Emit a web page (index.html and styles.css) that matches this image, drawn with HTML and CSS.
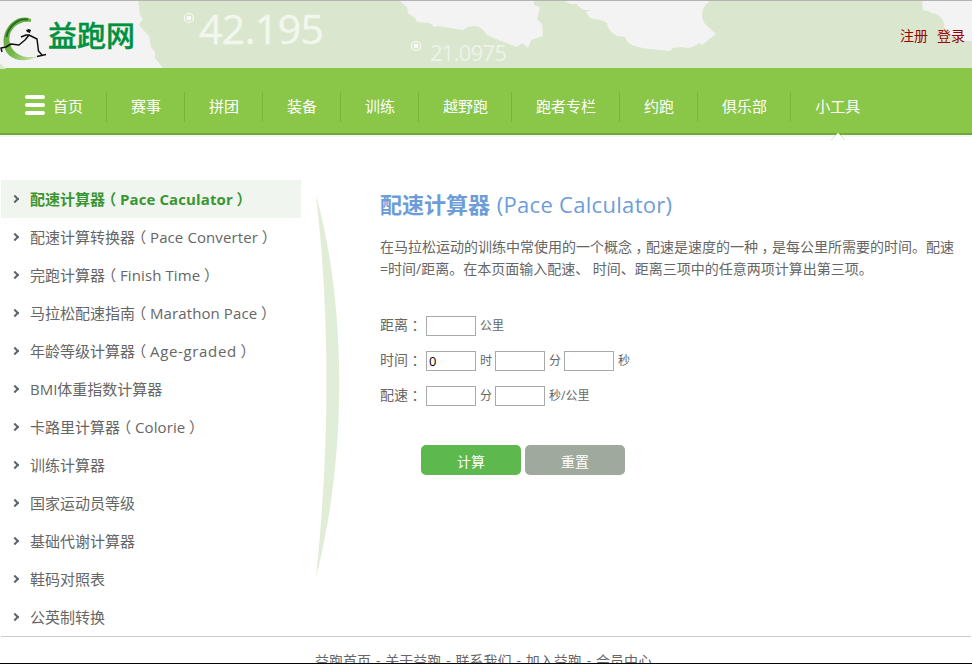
FILE: index.html
```html
<!DOCTYPE html>
<html lang="zh-CN">
<head>
<meta charset="utf-8">
<title>配速计算器 - 益跑网</title>
<link rel="stylesheet" href="styles.css">
</head>
<body>
<div class="page">
  <header class="header">
    <svg class="header-art" width="972" height="68" viewBox="0 0 972 68" aria-hidden="true">
      <path fill="#dbe6cf" d="M138 0L140 14 143 18 139 24 146 32 149 35 151 46 155 51 155 57 163 67 972 67 972 40 960 40 945 32 944 22Q941 13 932 12L928 10 923 9 922 0H710C700 7 701 18 705 23L716 33 702 44 699 42Q691 49 682 46L673 47 670 50 650 48Q631 46 627 40L625 36 617 35Q607 29 607 22 601 18 592 18 586 13 586 11L591 9 584 9 579 6 577 3 570 3 565 0H534L534 4 540 6 537 18 542 23 543 35 531 39 528 47 522 42 517 46Q500 40 487 34L484 30Q480 25 472 25 466 26 463 29L444 26 438 25 434 26 430 22 417 21 415 17 408 12 407 6 400 0Z"/>
      <path fill="#dbe6cf" d="M0 62L6 68H0Z"/>
      <g fill="none" stroke="#f8fbf4" stroke-width="1.200"><circle cx="189" cy="17" r="4.500"/><circle cx="416" cy="45" r="4.500"/></g>
      <g fill="#fafcf8"><circle cx="189" cy="17" r="2.300"/><circle cx="416" cy="45" r="2.300"/></g>
      <text class="art-big" x="199" y="42.500" textLength="125">42.195</text>
      <text class="art-small" x="430" y="60" textLength="77">21.0975</text>
    </svg>
    <a class="logo" href="#">
      <svg width="48" height="50" viewBox="0 0 48 50" aria-hidden="true">
        <defs><linearGradient id="ring" x1="0" y1="0" x2="1" y2="1"><stop offset="0" stop-color="#5aa43b"/><stop offset=".55" stop-color="#74b748"/><stop offset="1" stop-color="#d4eabc"/></linearGradient></defs>
        <path fill="url(#ring)" d="M31 6C18 0 4 13 3.500 28 3 44 20 53 38 43 25 47 11 41 9.500 28 8 17 18 7 31 9Z"/>
        <path fill="none" stroke="#286c27" stroke-width="2" d="M28 6.500C17 5 8 14 6.500 24"/>
        <path fill="none" stroke="#111" stroke-width="1.500" stroke-linejoin="round" d="M2 39L1 35 6 34 11 31 19 32 25 27 29 22 37 26 38.500 38 42 42M37 43.500L46 41.500M21 24L26 22 29 22"/>
        <path fill="#111" d="M26 17L29 16 31 17 30 20 27 19Z"/>
      </svg>
      <span class="logo-text">益跑网</span>
    </a>
    <div class="account"><a href="#">注册</a><a href="#">登录</a></div>
  </header>
  <nav class="nav">
    <a class="home" href="#"><span class="bars"><i></i><i></i><i></i></span>首页</a>
    <a href="#">赛事</a><a href="#">拼团</a><a href="#">装备</a><a href="#">训练</a><a href="#">越野跑</a><a href="#">跑者专栏</a><a href="#">约跑</a><a href="#">俱乐部</a>
    <a class="current" href="#">小工具<svg class="pointer" width="16" height="8" viewBox="0 0 16 8"><path fill="#fff" d="M1 8L8 0 15 8Z"/><path fill="none" stroke="#cfe7b0" d="M1 7L8 0 15 7"/></svg></a>
  </nav>
  <main class="main">
    <ul class="menu">
      <li class="active">配速计算器<b class="mid">（</b><span>Pace Caculator</span><b class="mid">）</b></li>
      <li>配速计算转换器<b class="mid">（</b><span>Pace Converter</span><b class="mid">）</b></li>
      <li>完跑计算器<b class="mid">（</b><span>Finish Time</span><b class="mid">）</b></li>
      <li>马拉松配速指南<b class="mid">（</b><span>Marathon Pace</span><b class="mid">）</b></li>
      <li>年龄等级计算器<b class="mid">（</b><span class="wide">Age-graded</span><b class="mid">）</b></li>
      <li>BMI体重指数计算器</li>
      <li>卡路里计算器<b class="mid">（</b><span>Colorie</span><b class="mid">）</b></li>
      <li>训练计算器</li>
      <li>国家运动员等级</li>
      <li>基础代谢计算器</li>
      <li>鞋码对照表</li>
      <li>公英制转换</li>
    </ul>
    <svg class="arc" width="30" height="386" viewBox="0 0 30 386" aria-hidden="true"><path fill="#e1edd6" d="M2 2C32 110 34 260 2 384C15 260 17 130 2 2Z"/></svg>
    <section class="content">
      <h1><strong>配速计算器</strong> <span>(Pace Calculator)</span></h1>
      <p class="intro">在马拉松运动的训练中常使用的一个概念<span class="mid">，</span>配速是速度的一种<span class="mid">，</span>是每公里所需要的时间。配速<br>=时间/距离。在本页面输入配速、 时间、距离三项中的任意两项计算出第三项。</p>
      <form>
        <div class="row"><label>距离<span class="mid">：</span></label><input type="text"><span>公里</span></div>
        <div class="row"><label>时间<span class="mid">：</span></label><input type="text" value="0"><span>时</span><input type="text"><span>分</span><input type="text"><span>秒</span></div>
        <div class="row"><label>配速<span class="mid">：</span></label><input type="text"><span>分</span><input type="text"><span>秒/公里</span></div>
        <div class="buttons"><button class="calc" type="button">计算</button><button class="reset" type="reset">重置</button></div>
      </form>
    </section>
  </main>
  <footer class="footer">益跑首页 - 关于益跑 - 联系我们 - 加入益跑 - 会员中心</footer>
</div>
</body>
</html>
```
FILE: styles.css
```css
* { box-sizing: border-box; }
body { margin: 0; background: #fff; color: #666; font: 14px/22px "Open Sans", "Noto Sans CJK SC", sans-serif; }
a { color: inherit; text-decoration: none; }
.page { height: 664px; overflow: hidden; display: flex; flex-direction: column; border-bottom: 1px solid #050505; }
.header { position: relative; height: 68px; flex: none; display: flex; justify-content: space-between; background: #f3f3f3; border-top: 1px solid #b5b2b5; }
.header-art { position: absolute; left: 0; top: 0; }
.header-art text { font-family: "Open Sans", sans-serif; fill: #f2f7ee; }
.header-art .art-big { font-size: 41px; stroke: #f2f7ee; stroke-width: .5px; }
.header-art .art-small { font-size: 22px; fill: #edf3e8; }
.logo { position: relative; display: flex; padding-top: 12px; }
.logo-text { font: 500 29px/43px "Noto Sans CJK SC", sans-serif; color: #00913f; -webkit-text-stroke: .4px #00913f; }
.account { position: relative; display: flex; gap: 9px; padding: 24px 7px 0 0; color: #900; }
.nav { height: 69px; flex: none; display: flex; padding-top: 24px; background: #8ac648; border-bottom: 2px solid #f5f5f5; box-shadow: inset 0 -2px #71a938; color: #fff; font-size: 15px; line-height: 29px; }
.nav a { position: relative; height: 30px; padding: 0 23px 0 24px; border-right: 1px solid #78b43a; }
.nav a.home { display: flex; width: 107px; gap: 8px; padding: 0 0 0 25px; }
.nav a.current { border: 0; }
.bars { display: flex; flex-direction: column; gap: 4px; padding-top: 3px; }
.bars i { width: 20px; height: 4px; border-radius: 2px; background: #fff; }
.pointer { position: absolute; left: 39px; top: 41px; }
.main { height: 499px; flex: none; display: flex; align-items: flex-start; padding: 43px 0 0 1px; }
.mid { display: inline-block; width: 1em; font-weight: inherit; font-family: "Noto Sans CJK SC", sans-serif; font-feature-settings: "halt"; text-align: center; }
.menu { width: 300px; margin: 0; padding: 0; list-style: none; font-size: 15px; line-height: 38px; }
.menu li { display: flex; align-items: center; height: 38px; white-space: nowrap; }
.menu li::before { content: ""; width: 5px; height: 5px; margin: 0 11px 0 12px; border: solid #5c6770; border-width: 2px 2px 0 0; transform: translateX(-1px) rotate(45deg); }
.menu li::before { box-sizing: border-box; width: 6px; height: 6px; }
.menu span { letter-spacing: .1px; }
.menu .wide { letter-spacing: .65px; }
.menu .active { background: #f0f5f0; color: #399632; font-weight: 700; }
.arc { margin: 13px 0 0 13px; }
.content { width: 580px; margin-left: 36px; padding-top: 8px; }
h1 { margin: 0; color: #6d9dd8; font-size: 22px; font-weight: 400; line-height: 32px; white-space: nowrap; }
h1 span { margin-left: 1px; letter-spacing: .3px; }
.intro { margin: 16px 0 0; white-space: nowrap; line-height: 22px; }
.intro .mid { line-height: 20px; }
form { margin-top: 36px; }
.row { display: flex; align-items: center; height: 20px; margin-bottom: 15px; font-size: 12px; }
.row label { width: 46px; padding-bottom: 3px; font-size: 14px; }
.row input { width: 50px; height: 20px; padding: 0 2px; border: 1px solid #a9a9a9; background: #fff; color: #000; font: 13px "Open Sans", sans-serif; }
.row > span { margin: 0 3px 0 4px; }
.buttons { display: flex; gap: 4px; margin: 39px 0 0 41px; }
button { width: 100px; height: 30px; padding: 2px 0 0; border: 0; border-radius: 5px; color: #fff; font: 14px "Noto Sans CJK SC", sans-serif; }
.calc { background: #5db94d; }
.reset { background: #a0a99e; }
.footer { flex: 1; overflow: hidden; margin: 0 1px; padding: 13px 0 0 314px; border-top: 1px solid #ccc; white-space: nowrap; word-spacing: 1.25px; }
```
